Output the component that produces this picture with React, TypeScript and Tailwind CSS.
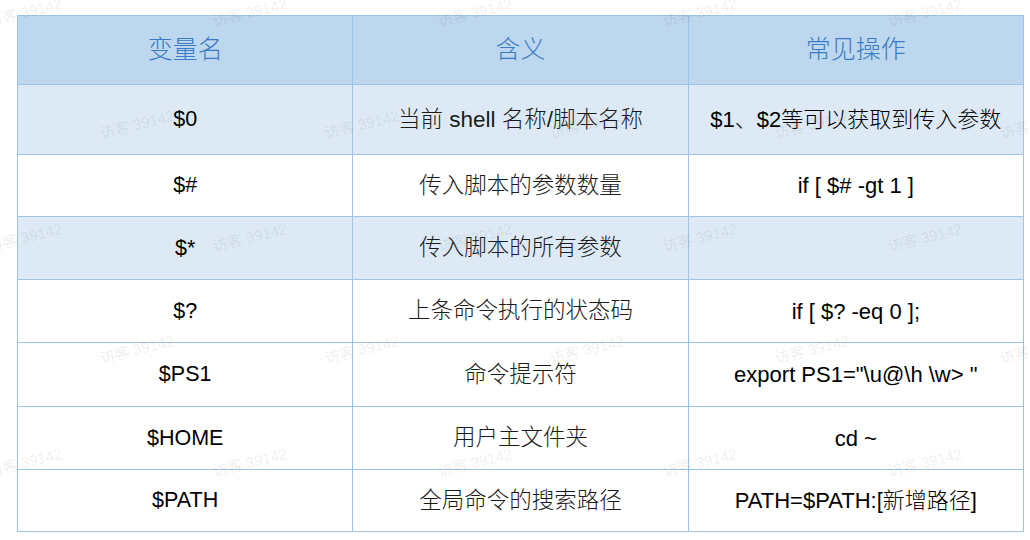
const rows = [
    { name: '$0', desc: '当前 shell 名称/脚本名称', op: '$1、$2等可以获取到传入参数', h: 'h-[70px]', shade: true },
    { name: '$#', desc: '传入脚本的参数数量', op: 'if [ $# -gt 1 ]', h: 'h-[62px]', shade: false },
    { name: '$*', desc: '传入脚本的所有参数', op: '', h: 'h-[63px]', shade: true },
    { name: '$?', desc: '上条命令执行的状态码', op: 'if [ $? -eq 0 ];', h: 'h-[63px]', shade: false },
    { name: '$PS1', desc: '命令提示符', op: 'export PS1="\\u@\\h \\w> "', h: 'h-[64px]', shade: false },
    { name: '$HOME', desc: '用户主文件夹', op: 'cd ~', h: 'h-[63px]', shade: false },
    { name: '$PATH', desc: '全局命令的搜索路径', op: 'PATH=$PATH:[新增路径]', h: 'h-[62px]', shade: false },
];

// watermark grid: staggered rows
const marks: { x: number; y: number }[] = [];
[13, 125, 238, 350, 463].forEach((y, i) => {
    const start = i % 2 === 0 ? 25 : 137;
    for (let x = start; x < 1100; x += 225) marks.push({ x, y });
});

export default function App() {
    return (
        <div className="relative h-[540px] w-[1030px] overflow-hidden bg-white" style={{ fontFamily: '"Liberation Sans", "Noto Sans CJK SC", sans-serif' }}>
            <table className="ml-[17px] mt-[15px] w-[1007px] table-fixed border-collapse border border-[#9dc3e6]">
                <thead>
                    <tr className="bg-[#bdd7ee]">
                        <th className="h-[69px] border border-[#9dc3e6] text-[25px] font-light text-[#3c7cc6]">变量名</th>
                        <th className="h-[69px] border border-[#9dc3e6] text-[25px] font-light text-[#3c7cc6]">含义</th>
                        <th className="h-[69px] border border-[#9dc3e6] text-[25px] font-light text-[#3c7cc6]">常见操作</th>
                    </tr>
                </thead>
                <tbody>
                    {rows.map((r) => (
                        <tr key={r.name} className={r.shade ? 'bg-[#ddeaf6]' : 'bg-white'}>
                            <td className={`${r.h} border border-[#9dc3e6] text-center text-[21.5px] font-light text-black`}>{r.name}</td>
                            <td className={`${r.h} border border-[#9dc3e6] text-center text-[22.5px] font-light text-[#1a1a1a]`}>{r.desc}</td>
                            <td className={`${r.h} border border-[#9dc3e6] text-center text-[22px] font-light text-black`}>{r.op}</td>
                        </tr>
                    ))}
                </tbody>
            </table>

            <div className="pointer-events-none absolute inset-0">
                {marks.map((m, i) => (
                    <span
                        key={i}
                        className="absolute -translate-x-1/2 -translate-y-1/2 -rotate-[14deg] whitespace-nowrap text-[15px] text-black/[0.08]"
                        style={{ left: m.x, top: m.y }}
                    >
                        访客 39142
                    </span>
                ))}
            </div>
        </div>
    );
}
